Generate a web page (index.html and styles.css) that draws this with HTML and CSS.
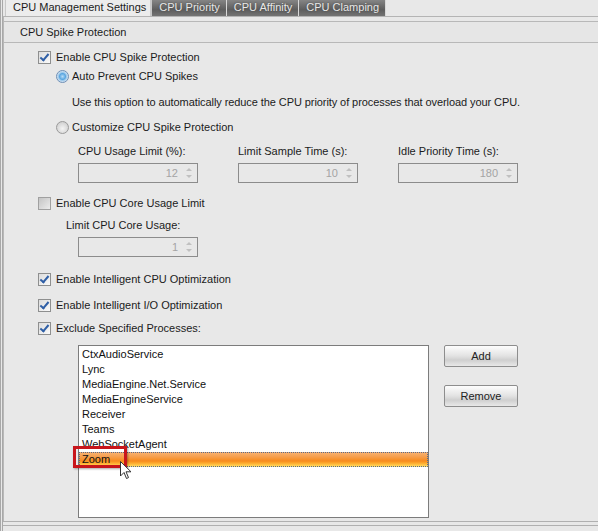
FILE: index.html
```html
<!DOCTYPE html>
<html>
<head>
    <title>CPU Management Settings</title>
    <link rel="stylesheet" href="styles.css">
</head>
<body>

<div class="window">
    <div class="tabs">
        <div class="tab active">CPU Management Settings</div>
        <div class="tab">CPU Priority</div>
        <div class="tab">CPU Affinity</div>
        <div class="tab">CPU Clamping</div>
    </div>

    <div class="panel">
        <div class="group-title">CPU Spike Protection</div>

        <div class="content">
            <div class="row r1 ind1"><span class="check on"></span>Enable CPU Spike Protection</div>
            <div class="row r2 ind2"><span class="radio on"></span>Auto Prevent CPU Spikes</div>
            <div class="row r3 ind3">Use this option to automatically reduce the CPU priority of processes that overload your CPU.</div>
            <div class="row r4 ind2"><span class="radio"></span>Customize CPU Spike Protection</div>

            <div class="fields r5">
                <div class="field">
                    <div class="row">CPU Usage Limit (%):</div>
                    <div class="spin"><span>12</span><i class="arrows"></i></div>
                </div>
                <div class="field">
                    <div class="row">Limit Sample Time (s):</div>
                    <div class="spin"><span>10</span><i class="arrows"></i></div>
                </div>
                <div class="field">
                    <div class="row">Idle Priority Time (s):</div>
                    <div class="spin"><span>180</span><i class="arrows"></i></div>
                </div>
            </div>

            <div class="row r6 ind1"><span class="check off"></span>Enable CPU Core Usage Limit</div>
            <div class="row r7 ind4">Limit CPU Core Usage:</div>
            <div class="fields r8">
                <div class="spin"><span>1</span><i class="arrows"></i></div>
            </div>

            <div class="row r9 ind1"><span class="check on"></span>Enable Intelligent CPU Optimization</div>
            <div class="row r10 ind1"><span class="check on"></span>Enable Intelligent I/O Optimization</div>
            <div class="row r11 ind1"><span class="check on"></span>Exclude Specified Processes:</div>

            <div class="exclude">
                <div class="listbox">
                    <div class="item">CtxAudioService</div>
                    <div class="item">Lync</div>
                    <div class="item">MediaEngine.Net.Service</div>
                    <div class="item">MediaEngineService</div>
                    <div class="item">Receiver</div>
                    <div class="item">Teams</div>
                    <div class="item">WebSocketAgent</div>
                    <div class="item selected">Zoom</div>
                    <div class="highlight"></div>
                    <svg class="cursor" width="12" height="19" viewBox="0 0 12 19">
                        <path d="M0.5 0.5 L0.5 15 L4 11.5 L6.5 17.5 L8.5 16.6 L6 10.8 L11 10.8 Z" fill="#fff" stroke="#333" stroke-width="1"/>
                    </svg>
                </div>
                <div class="buttons">
                    <div class="button">Add</div>
                    <div class="button">Remove</div>
                </div>
            </div>
        </div>
    </div>
    <div class="footer"></div>
</div>

</body>
</html>
```

FILE: styles.css
```css
body {
    margin: 0;
    background: #e8e8e8;
    font-family: 'Liberation Sans', Arial, sans-serif;
    font-size: 11px;
    color: #1b1b1b;
}

.window {
    width: 598px;
    height: 531px;
    overflow: hidden;
    border-left: 3px double #a8a8a8;
    box-sizing: border-box;
    position: relative;
}

/* tab strip */
.tabs {
    display: flex;
    height: 16px;
    padding-left: 2px;
}

.tab {
    height: 16px;
    line-height: 15px;
    padding: 0 6px 0 7px;
    color: #e8e8e8;
    background: linear-gradient(#858585, #5e5e5e 60%, #747474);
    border-right: 1px solid #d8d8d8;
    text-shadow: 0 0 2px #444;
    box-sizing: border-box;
}

.tab.active {
    color: #1b1b1b;
    background: #ececec;
    border-left: 1px solid #c8c8c8;
    border-right: 2px solid #c8c8c8;
    text-shadow: none;
    padding: 0 4px 0 7px;
}

.panel {
    border-top: 1px solid #b4b4b4;
    border-left: 1px solid #b8b8b8;
    height: 504px;
}

.group-title {
    margin-top: 4px;
    border-top: 1px solid #b8b8b8;
    border-bottom: 1px solid #b8b8b8;
    height: 20px;
    line-height: 20px;
    padding-left: 16px;
    background: #e6e6e6;
}

.content {
    position: relative;
    padding-left: 4px;
}

.row {
    height: 16px;
    line-height: 16px;
    display: flex;
    align-items: center;
    white-space: nowrap;
}

.ind1 { padding-left: 30px; }
.ind2 { padding-left: 48px; }
.ind3 { padding-left: 64px; }
.ind4 { padding-left: 58px; }

.r1 { margin-top: 6px; }
.r2 { margin-top: 3px; }
.r3 { margin-top: 10px; letter-spacing: -0.08px; }
.r4 { margin-top: 9px; }
.r5 { margin-top: 8px; }
.r6 { margin-top: 12px; }
.r7 { margin-top: 6px; }
.r8 { margin-top: 4px; }
.r9 { margin-top: 14px; }
.r10 { margin-top: 10px; }
.r11 { margin-top: 7px; }

/* checkbox and radio */
.check {
    width: 11px;
    height: 11px;
    border: 1px solid #8e8f8f;
    background: linear-gradient(135deg, #dcdcdc, #fafafa);
    margin-right: 5px;
    flex: none;
    position: relative;
}

.check.on::after {
    content: "";
    position: absolute;
    left: 3px;
    top: 0px;
    width: 3px;
    height: 7px;
    border-right: 2px solid #2f5fa6;
    border-bottom: 2px solid #2f5fa6;
    transform: rotate(40deg);
}

.check.off {
    background: linear-gradient(135deg, #c4c4c4, #ececec);
    border-color: #a0a0a0;
}

.radio {
    width: 11px;
    height: 11px;
    border-radius: 50%;
    border: 1px solid #9a9a9a;
    background: radial-gradient(circle at 50% 60%, #f4f4f4, #c6c6c6);
    margin-right: 3px;
    flex: none;
}

.radio.on {
    border-color: #6f8fb5;
    background: radial-gradient(circle, #b7dcf6 0, #5ba6e0 3px, #9cc8ea 4px, #e4eef8 6px);
}

/* number fields */
.fields {
    display: flex;
    gap: 40px;
    padding-left: 70px;
}

.field {
    width: 120px;
}

.field .row {
    margin-bottom: 4px;
}

.spin {
    width: 120px;
    height: 20px;
    box-sizing: border-box;
    border: 1px solid #8c8c8c;
    display: flex;
    align-items: center;
    justify-content: flex-end;
    color: #a4a4a4;
    padding-right: 5px;
}

.arrows {
    width: 7px;
    height: 14px;
    margin-left: 7px;
    position: relative;
}

.arrows::before,
.arrows::after {
    content: "";
    position: absolute;
    left: 1px;
    border-left: 3px solid transparent;
    border-right: 3px solid transparent;
}

.arrows::before {
    top: 2px;
    border-bottom: 3px solid #c0c0c0;
}

.arrows::after {
    bottom: 2px;
    border-top: 3px solid #c0c0c0;
}

/* process list */
.exclude {
    display: flex;
    gap: 15px;
    padding-left: 70px;
    margin-top: 9px;
}

.listbox {
    width: 351px;
    height: 173px;
    box-sizing: border-box;
    border: 1px solid #7c7c7c;
    background: #fff;
    padding-top: 1px;
    position: relative;
}

.item {
    height: 15px;
    line-height: 15px;
    padding-left: 3px;
    color: #111;
}

.item.selected {
    background: linear-gradient(#f8b475, #f6a050 30%, #f88a1c 60%, #ffb838 80%, #ffe470);
    outline: 1px dotted #5a6a8a;
    outline-offset: -1px;
}

.highlight {
    position: absolute;
    left: -6px;
    top: 100px;
    width: 48px;
    height: 16px;
    border: 3px solid #c8151b;
    box-shadow: 1px 1px 2px rgba(0, 0, 0, 0.35);
}

.cursor {
    position: absolute;
    left: 41px;
    top: 115px;
}

.buttons {
    display: flex;
    flex-direction: column;
    gap: 18px;
}

.button {
    width: 74px;
    height: 22px;
    box-sizing: border-box;
    border: 1px solid #8d8d8d;
    border-radius: 2px;
    background: linear-gradient(#fdfdfd, #e2e2e2 50%, #cfcfcf 70%, #e8e8e8);
    text-align: center;
    line-height: 20px;
    color: #222;
}

.footer {
    border-top: 1px solid #b0b0b0;
    border-bottom: 1px solid #b0b0b0;
    height: 3px;
}
```
